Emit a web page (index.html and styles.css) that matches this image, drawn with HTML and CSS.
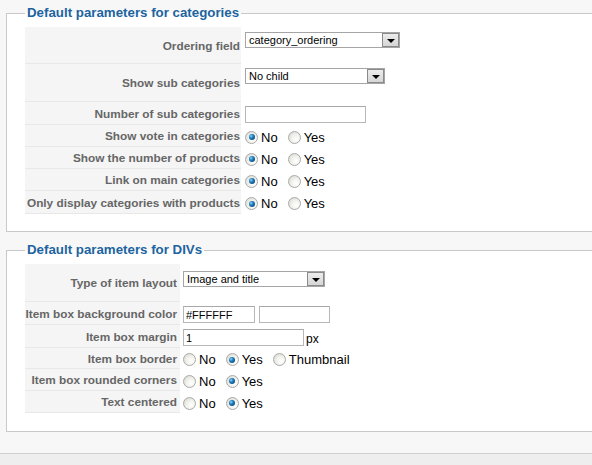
FILE: index.html
```html
<!DOCTYPE html>
<html>
<head>
<meta charset="utf-8">
<link rel="stylesheet" href="styles.css">
</head>
<body>
<fieldset class="panel panel-cat">
  <legend>Default parameters for categories</legend>
  <div class="form form-cat">
    <div class="key r37">Ordering field</div>
    <div class="val top pt5"><span class="select w155"><span class="sel-text">category_ordering</span><span class="arrow"></span></span></div>

    <div class="key r38">Show sub categories</div>
    <div class="val top pt4"><span class="select w140"><span class="sel-text">No child</span><span class="arrow"></span></span></div>

    <div class="key r23">Number of sub categories</div>
    <div class="val"><input class="input w121" type="text" value=""></div>

    <div class="key r22">Show vote in categories</div>
    <div class="val"><span class="opt"><span class="radio on"></span>No</span><span class="opt"><span class="radio"></span>Yes</span></div>

    <div class="key r22">Show the number of products</div>
    <div class="val"><span class="opt"><span class="radio on"></span>No</span><span class="opt"><span class="radio"></span>Yes</span></div>

    <div class="key r22">Link on main categories</div>
    <div class="val"><span class="opt"><span class="radio on"></span>No</span><span class="opt"><span class="radio"></span>Yes</span></div>

    <div class="key r23">Only display categories with products</div>
    <div class="val"><span class="opt"><span class="radio on"></span>No</span><span class="opt"><span class="radio"></span>Yes</span></div>
  </div>
</fieldset>

<fieldset class="panel panel-div">
  <legend>Default parameters for DIVs</legend>
  <div class="form form-div">
    <div class="key r38">Type of item layout</div>
    <div class="val top pt7"><span class="select w142"><span class="sel-text">Image and title</span><span class="arrow"></span></span></div>

    <div class="key r23">Item box background color</div>
    <div class="val"><input class="input w72" type="text" value="#FFFFFF"><input class="input w71 gap" type="text" value=""></div>

    <div class="key r23">Item box margin</div>
    <div class="val"><input class="input w121" type="text" value="1"><span class="unit">px</span></div>

    <div class="key r21">Item box border</div>
    <div class="val"><span class="opt"><span class="radio"></span>No</span><span class="opt"><span class="radio on"></span>Yes</span><span class="opt"><span class="radio"></span>Thumbnail</span></div>

    <div class="key r22">Item box rounded corners</div>
    <div class="val"><span class="opt"><span class="radio"></span>No</span><span class="opt"><span class="radio on"></span>Yes</span></div>

    <div class="key r22">Text centered</div>
    <div class="val"><span class="opt"><span class="radio"></span>No</span><span class="opt"><span class="radio on"></span>Yes</span></div>
  </div>
</fieldset>

<div class="footer"></div>
</body>
</html>
```

FILE: styles.css
```css
html, body {
  margin: 0;
  padding: 0;
}
body {
  background: #f7f7f7;
  font-family: "Liberation Sans", Arial, sans-serif;
  overflow: hidden;
  width: 592px;
  height: 465px;
}
.panel {
  display: block;
  margin: 5px 0 0 6px;
  padding: 6px 0 17px 18px;
  border: 1px solid #c9c9c9;
  border-right: none;
  background: #fff;
  min-width: 0;
}
.panel-div {
  margin-top: 10px;
  padding-bottom: 18px;
}
legend {
  padding: 0 2px;
  color: #1d64a0;
  font-size: 13.3px;
  font-weight: bold;
  line-height: 16px;
}
.form {
  display: grid;
}
.form-cat {
  grid-template-columns: 216px auto;
}
.form-div {
  grid-template-columns: 155px auto;
}
.key {
  box-sizing: border-box;
  background: #f5f5f5;
  border-bottom: 1px solid #e8e8e8;
  color: #666;
  font-weight: bold;
  font-size: 11.8px;
  white-space: nowrap;
  display: flex;
  align-items: center;
  justify-content: flex-end;
  padding: 1px 1px 0 0;
}
.form-div .key {
  padding-right: 3px;
}
.r37 { height: 37px; }
.r38 { height: 38px; }
.r23 { height: 23px; }
.r22 { height: 22px; }
.r21 { height: 21px; }
.val {
  display: flex;
  align-items: center;
  padding: 2px 0 0 4px;
  font-size: 13px;
  color: #000;
  white-space: nowrap;
}
.form-div .val {
  padding-left: 3px;
}
.val.top {
  align-items: flex-start;
}
.pt4 { padding-top: 4px; }
.pt5 { padding-top: 5px; }
.pt7 { padding-top: 7px; }
.select {
  display: inline-flex;
  align-items: center;
  box-sizing: border-box;
  height: 16px;
  border: 1px solid #a5a5a8;
  background: #fff;
  font-size: 11px;
  color: #000;
}
.w155 { width: 155px; }
.w140 { width: 140px; }
.w142 { width: 142px; }
.sel-text {
  flex: 1;
  padding-left: 3px;
  line-height: 14px;
}
.arrow {
  box-sizing: border-box;
  width: 17px;
  height: 14px;
  border: 1px solid #8a8a8a;
  background: linear-gradient(#ececec, #d6d6d6);
  display: flex;
  align-items: center;
  justify-content: center;
}
.arrow::after {
  content: "";
  width: 0;
  height: 0;
  border-left: 4px solid transparent;
  border-right: 4px solid transparent;
  border-top: 4px solid #000;
  margin-top: 1px;
}
.input {
  box-sizing: border-box;
  height: 17px;
  margin: 0;
  border: 1px solid #b7b7b7;
  border-top-color: #a8a8a8;
  background: #fff;
  font-family: "Liberation Sans", Arial, sans-serif;
  font-size: 11px;
  padding: 1px 2px 0;
  color: #000;
}
.w121 { width: 121px; }
.w72 { width: 72px; }
.w71 { width: 71px; }
.gap { margin-left: 4px; }
.unit {
  font-size: 12px;
  margin-left: 2px;
  padding-top: 2px;
}
.opt {
  display: inline-flex;
  align-items: center;
  margin-right: 10px;
}
.radio {
  position: relative;
  flex: none;
  box-sizing: border-box;
  width: 13px;
  height: 13px;
  margin-right: 3px;
  border-radius: 50%;
  border: 1px solid #a9a9a9;
  background: radial-gradient(circle at 65% 65%, #ffffff 0%, #f1f1ec 45%, #d4d4ce 100%);
}
.radio.on::after {
  content: "";
  position: absolute;
  left: 2.5px;
  top: 2.5px;
  width: 6px;
  height: 6px;
  border-radius: 50%;
  background: radial-gradient(circle at 35% 35%, #8fd6f8 0%, #2380c0 35%, #0e4f84 75%, #082f52 100%);
}
.footer {
  margin-top: 21px;
  height: 11px;
  border-top: 1px solid #d0d0d0;
  background: #eeeeee;
}
```
